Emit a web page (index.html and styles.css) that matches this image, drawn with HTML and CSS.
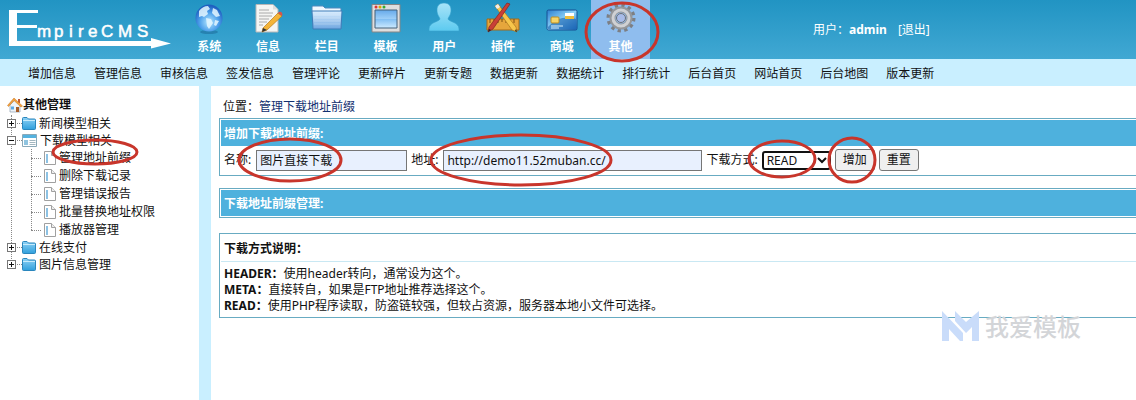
FILE: index.html
```
<!DOCTYPE html>
<html lang="zh-CN">
<head>
<meta charset="utf-8">
<title>EmpireCMS</title>
<link rel="stylesheet" href="styles.css">
</head>
<body>
<svg class="defs" width="0" height="0" aria-hidden="true">
  <defs>
    <radialGradient id="globe" cx="50%" cy="65%" r="60%"><stop offset="0" stop-color="#b5e8ff"/><stop offset=".6" stop-color="#4b9eea"/><stop offset="1" stop-color="#1f5fc0"/></radialGradient>
    <linearGradient id="folder" x1="0" y1="0" x2="0" y2="1"><stop offset="0" stop-color="#dcefff"/><stop offset="1" stop-color="#6fa6e0"/></linearGradient>
    <linearGradient id="pane" x1="0" y1="0" x2="0" y2="1"><stop offset="0" stop-color="#65a9ea"/><stop offset=".5" stop-color="#9fd0f8"/><stop offset=".5" stop-color="#7fbdf2"/><stop offset="1" stop-color="#cdeaff"/></linearGradient>
    <linearGradient id="person" x1="0" y1="0" x2="0" y2="1"><stop offset="0" stop-color="#a8e4f8"/><stop offset="1" stop-color="#5ccaf0"/></linearGradient>
    <linearGradient id="card" x1="0" y1="0" x2="1" y2="1"><stop offset="0" stop-color="#2b7fd0"/><stop offset=".5" stop-color="#8ed2f8"/><stop offset="1" stop-color="#1c6fc4"/></linearGradient>
    <linearGradient id="treefolder" x1="0" y1="0" x2="0" y2="1"><stop offset="0" stop-color="#8fd2f5"/><stop offset="1" stop-color="#2f9fdc"/></linearGradient>
    <symbol id="i-folder" viewBox="0 0 14 13"><path d="M.5 1.500q0-1 1-1h3.500l1.500 1.500h6q1 0 1 1v8.500q0 1-1 1h-11q-1 0-1-1z" fill="url(#treefolder)" stroke="#2a86bd"/><path d="M1 3.500h12" stroke="#c6ebfc"/></symbol>
    <symbol id="i-open" viewBox="0 0 15 13"><path d="M.5.5h14v12h-14z" fill="#fff" stroke="#8aa9b8"/><path d="M1 1h13v3H1z" fill="#54b2df"/><path d="M2 6h4v5H2z" fill="#8fc4e0"/><path d="M7.500 6.500h6M7.500 8.500h6M7.500 10.500h6" stroke="#a3b7c0"/></symbol>
    <symbol id="i-doc" viewBox="0 0 12 14"><path d="M.5.5h7l4 4v9h-11z" fill="#fff" stroke="#a0a0a0"/><path d="M7.500.5v4h4" fill="#eee" stroke="#a0a0a0"/><path d="M2 3h2v9H2z" fill="#8cc2e4"/></symbol>
  </defs>
</svg>

<header class="header">
  <svg class="logo" width="172" height="50" viewBox="0 0 172 50" role="img" aria-label="EmpireCMS">
    <path fill="#fff" d="M9 10h29v3H17v12h20v3H17v13h134v-3l20 5.500-20 5V46H9z"/>
    <text class="logo-text" y="37" x="37 54 69 78 88 101 118 137" fill="#fff">mpireCMS</text>
  </svg>
  <nav class="modules">
    <a href="#"><svg width="30" height="32" viewBox="0 0 30 32"><ellipse cx="15" cy="30" rx="9" ry="2" fill="#1a6695" opacity=".5"/><circle cx="15" cy="16" r="13.500" fill="url(#globe)"/><path d="M5 9q4-5 9-5l2 3-3 2 1 3-4 3-2-1-3 1zM19 6l4 2 3 6-4 1-4-4zM12 16l5 1 2 4-4 6-2-3zM21 18l4 1-3 5-2-1z" fill="#e5f7ff" opacity=".85"/></svg>系统</a>
    <a href="#"><svg width="30" height="32" viewBox="0 0 30 32"><path d="M3 2.500h17l5 5V30H3z" fill="#f5f5f3" stroke="#b7b7b7"/><path d="M20 2.500v5h5" fill="#ddd"/><path d="M6 8h10M6 11h14M6 14h13M6 17h10M6 20h8M6 23h4" stroke="#aaa"/><path d="M10 26L25 11l4 3-15 14-5 2z" fill="#f4b438" stroke="#b67b1a" stroke-width=".7"/><path d="M25 11l1-1q2-1 3 1t0 3z" fill="#d9534a"/><path d="M10 26l4 2-5 2z" fill="#333"/></svg>信息</a>
    <a href="#"><svg width="32" height="32" viewBox="0 0 32 32"><path d="M1 8V5q0-1 1-1h10l2 2h15q1 0 1 1v4H1z" fill="#f0f8ff" stroke="#4f89bd"/><path d="M1 9h30l-1 18H2z" fill="url(#folder)" stroke="#3f7cb7"/><path d="M3 13h26M3 16h26M3 19h26M3 22h26" stroke="#fff" opacity=".25"/></svg>栏目</a>
    <a href="#"><svg width="32" height="32" viewBox="0 0 32 32"><path d="M2 2.500h28V30H2z" fill="#dedede" stroke="#858585"/><path d="M5 8h22v18H5z" fill="url(#pane)" stroke="#42607a"/><circle cx="6" cy="5" r="1.500" fill="#d33"/><circle cx="10" cy="5" r="1.500" fill="#da0"/><circle cx="14" cy="5" r="1.500" fill="#3a3"/></svg>模板</a>
    <a href="#"><svg width="32" height="32" viewBox="0 0 32 32"><path d="M16 1c5 0 7 3 7 7 0 5-2 6-3 9 1 3 11 3 11 10v2H1v-2c0-7 10-7 11-10-1-3-3-4-3-9 0-4 2-7 7-7z" fill="url(#person)" stroke="#36a3cf" stroke-width=".6"/></svg>用户</a>
    <a href="#"><svg width="34" height="32" viewBox="0 0 34 32"><path d="M1 17h32v11H1z" fill="#e6a63c" stroke="#a76b16"/><path d="M4 17v4M8 17v3M12 17v4M16 17v3M20 17v4M24 17v3M28 17v4" stroke="#7d5012"/><path d="M9 4l3-2 18 23 1 5-5-2z" fill="#f7c64b" stroke="#a9761e" stroke-width=".7"/><path d="M21 1l3 1L7 27l-5 3 1-5z" fill="#c93f37" stroke="#842620" stroke-width=".7"/><path d="M9 4l3-2 2 3-3 2z" fill="#eee"/><path d="M3 27l-1 3 3-2M29 29l2 1-1-3" fill="#222"/></svg>插件</a>
    <a href="#"><svg width="32" height="32" viewBox="0 0 32 32"><rect x="1" y="8" width="30" height="20" rx="1.500" fill="url(#card)" stroke="#164f93"/><path d="M2 25Q14 12 30 17v10H2z" fill="#185fae" opacity=".6"/><rect x="5" y="15" width="8" height="6" rx="1" fill="#f6d467" stroke="#ba8b20"/><path d="M19 11h9v3h-9z" fill="#fff"/><path d="M19 14h9v3h-9z" fill="#edbd3d"/><path d="M5 24h12M5 26h8" stroke="#d4efff"/></svg>商城</a>
    <a href="#" class="active"><svg width="32" height="32" viewBox="0 0 32 32"><circle cx="16" cy="16" r="12.500" fill="none" stroke="#7c7f84" stroke-width="4" stroke-dasharray="3.200 3.345"/><circle cx="16" cy="16" r="8.500" fill="none" stroke="#94979b" stroke-width="6"/><circle cx="16" cy="16" r="8" fill="none" stroke="#cfd1d4" stroke-width="3"/><circle cx="16" cy="16" r="4.500" fill="#a8bce8" stroke="#6d7075"/></svg>其他</a>
  </nav>
  <div class="user">用户：<b>admin</b><a href="#">[退出]</a></div>
</header>

<nav class="subnav">
  <a href="#">增加信息</a><a href="#">管理信息</a><a href="#">审核信息</a><a href="#">签发信息</a><a href="#">管理评论</a><a href="#">更新碎片</a><a href="#">更新专题</a><a href="#">数据更新</a><a href="#">数据统计</a><a href="#">排行统计</a><a href="#">后台首页</a><a href="#">网站首页</a><a href="#">后台地图</a><a href="#">版本更新</a>
</nav>

<div class="layout">
  <aside class="sidebar">
    <h2><svg width="16" height="16" viewBox="0 0 16 16"><path d="M3 8l5-5 5 5v7H3z" fill="#eef3f8" stroke="#8d9eb0" stroke-width=".7"/><path d="M11 2h2v4h-2z" fill="#c25c38"/><path d="M.5 8.500L7 1l8.500 8-1.500 1-7-6.500-5.500 6z" fill="#f3a23c" stroke="#c4701f" stroke-width=".5"/><path d="M9 10h3v5H9z" fill="#a55d29"/><path d="M4 9.500h3v3H4z" fill="#5ba9e6"/></svg>其他管理</h2>
    <ul class="tree">
      <li><a class="node" href="#"><span class="toggle plus"></span><svg width="14" height="13"><use href="#i-folder"/></svg>新闻模型相关</a></li>
      <li><a class="node" href="#"><span class="toggle"></span><svg width="15" height="13"><use href="#i-open"/></svg>下载模型相关</a>
        <ul class="leaves">
          <li><a href="#"><svg width="12" height="14"><use href="#i-doc"/></svg>管理地址前缀</a></li>
          <li><a href="#"><svg width="12" height="14"><use href="#i-doc"/></svg>删除下载记录</a></li>
          <li><a href="#"><svg width="12" height="14"><use href="#i-doc"/></svg>管理错误报告</a></li>
          <li><a href="#"><svg width="12" height="14"><use href="#i-doc"/></svg>批量替换地址权限</a></li>
          <li><a href="#"><svg width="12" height="14"><use href="#i-doc"/></svg>播放器管理</a></li>
        </ul>
      </li>
      <li><a class="node" href="#"><span class="toggle plus"></span><svg width="14" height="13"><use href="#i-folder"/></svg>在线支付</a></li>
      <li><a class="node" href="#"><span class="toggle plus"></span><svg width="14" height="13"><use href="#i-folder"/></svg>图片信息管理</a></li>
    </ul>
  </aside>

  <main class="main">
    <p class="crumb">位置：<a href="#">管理下载地址前缀</a></p>
    <section class="panel">
      <h3 class="bar">增加下载地址前缀:</h3>
      <form class="form">
        <label for="name">名称:</label><input id="name" class="name" type="text" value="图片直接下载">
        <label for="url">地址:</label><input id="url" class="url" type="text" value="http://demo11.52muban.cc/">
        <label for="mode">下载方式:</label><span class="select"><select id="mode"><option>READ</option><option>META</option><option>HEADER</option></select><svg width="10" height="7" viewBox="0 0 10 7"><path d="M1 1l4 4 4-4" fill="none" stroke="#111" stroke-width="2"/></svg></span>
        <button type="button">增加</button><button type="reset">重置</button>
      </form>
    </section>
    <section class="panel"><h3 class="bar">下载地址前缀管理:</h3></section>
    <section class="panel">
      <h3 class="title">下载方式说明：</h3>
      <div class="notes">
        <p><b>HEADER：</b>使用header转向，通常设为这个。</p>
        <p><b>META：</b>直接转自，如果是FTP地址推荐选择这个。</p>
        <p><b>READ：</b>使用PHP程序读取，防盗链较强，但较占资源，服务器本地小文件可选择。</p>
      </div>
    </section>
  </main>
</div>

<svg class="marks" width="1136" height="400" viewBox="0 0 1136 400" aria-hidden="true">
  <ellipse cx="622" cy="32" rx="36" ry="29"/>
  <ellipse cx="95" cy="152" rx="42" ry="12"/>
  <ellipse cx="290" cy="160" rx="51" ry="21"/>
  <ellipse cx="521" cy="160" rx="90" ry="25"/>
  <ellipse cx="782" cy="159" rx="33" ry="18"/>
  <ellipse cx="852" cy="160" rx="23" ry="22"/>
</svg>
<div class="watermark"><svg width="37" height="30" viewBox="0 0 37 30"><path d="M0 0l21 22v8h-3L7 18v12H0zM13 0l11 11L37 0v30h-7V16l-6 6-11-12z" fill="#c9dcfa"/></svg>我爱模板</div>
</body>
</html>
```
FILE: styles.css
```
* { box-sizing: border-box; }
body {
  margin: 0;
  position: relative;
  min-height: 100vh;
  display: flex;
  flex-direction: column;
  overflow-x: hidden;
  background: #fff;
  color: #111;
  font: 12px/16px "Noto Sans", "Noto Sans CJK SC", sans-serif;
}
a { color: inherit; text-decoration: none; }
h2, h3, p, ul { margin: 0; padding: 0; font-size: 12px; }
ul { list-style: none; }
svg { flex: none; display: block; }
.defs { position: absolute; }

.header {
  display: flex;
  height: 59px;
  color: #fff;
  background: linear-gradient(#2194c3, #41a8d3);
}
.logo-text { font: 17px "Liberation Sans", sans-serif; stroke: #fff; stroke-width: 0.5px; }
.modules {
  display: grid;
  grid-template-columns: repeat(8, 1fr);
  width: 470px;
  margin-left: 8px;
}
.modules a {
  display: flex;
  flex-direction: column;
  align-items: center;
  gap: 5px;
  padding-top: 2px;
  font-weight: 700;
}
.modules .active { background: #8fbdee; }
.user { margin: 22px 0 0 163px; }
.user a { margin-left: 11px; }

.subnav {
  display: flex;
  align-items: center;
  gap: 18px;
  height: 27px;
  padding: 2px 28px 0;
  background: #c9efff;
  white-space: nowrap;
}

.layout { flex: 1; display: flex; }
.sidebar {
  width: 211px;
  flex: none;
  padding: 9px 0 0 7px;
  border-right: 12px solid #c9efff;
}
.sidebar h2 { display: flex; align-items: center; height: 20px; }
.tree { position: relative; }
.tree::before {
  content: "";
  position: absolute;
  left: 4px;
  top: 0;
  bottom: 8px;
  border-left: 1px dotted #888;
}
.node { position: relative; display: flex; align-items: center; height: 17px; gap: 3px; }
.toggle {
  width: 9px;
  height: 9px;
  margin-right: 3px;
  border: 1px solid #777;
  background: linear-gradient(#111, #111) center / 5px 1px no-repeat #fff;
}
.node::before {
  content: "";
  position: absolute;
  left: 10px;
  width: 5px;
  border-top: 1px dotted #888;
}
.plus {
  background: linear-gradient(#111, #111) center / 5px 1px no-repeat,
    linear-gradient(#111, #111) center / 1px 5px no-repeat, #fff;
}
.leaves { position: relative; padding-left: 24px; }
.leaves::before {
  content: "";
  position: absolute;
  left: 24px;
  top: 0;
  bottom: 9px;
  border-left: 1px dotted #888;
}
.leaves a { display: flex; align-items: center; height: 18px; gap: 3px; }
.leaves a::before { content: ""; width: 10px; border-top: 1px dotted #888; }

.main { flex: 1; min-width: 0; padding: 12px 0 0 8px; }
.crumb { padding: 1px 0 3px 4px; }
.crumb a { color: #123070; }
.panel {
  margin-bottom: 12px;
  padding: 1px 0 1px 1px;
  border: 1px solid #68abc2;
  border-right: 0;
}
.panel:nth-of-type(2) { margin-bottom: 15px; }
.bar { height: 26px; padding: 6px 3px 0; color: #fff; background: #4eb1dd; }
.form {
  display: flex;
  align-items: center;
  height: 28px;
  padding-left: 3px;
  white-space: nowrap;
}
.form input, .form select, .form button { font: inherit; color: #111; }
.form input {
  height: 21px;
  margin: 0 4px 0 5px;
  padding: 0 3px;
  border: 1px solid #767676;
  background: #e8f0fe;
}
.name { width: 151px; }
.url { width: 259px; }
.select { position: relative; margin: 0 4px; }
.select select {
  display: block;
  appearance: none;
  width: 69px;
  height: 19px;
  padding: 0 3px;
  border: 2px solid #111;
  border-radius: 3px;
  background: #fff;
}
.select svg { position: absolute; right: 4px; top: 6px; pointer-events: none; }
.form button {
  width: 40px;
  height: 22px;
  margin-right: 4px;
  padding: 0;
  border: 1px solid #767676;
  border-radius: 3px;
  background: #efefef;
}
.title { height: 27px; padding: 6px 3px 0; border-bottom: 1px solid #c9e8f3; }
.notes { padding: 4px 3px 2px; }

.marks { position: absolute; left: 0; top: 0; pointer-events: none; }
.marks ellipse { fill: none; stroke: #c8352b; stroke-width: 3px; }
.watermark {
  position: absolute;
  left: 942px;
  top: 311px;
  display: flex;
  align-items: center;
  gap: 6px;
  color: #d3d5d8;
  font: 500 24px/30px "Noto Sans CJK SC", sans-serif;
}
```
